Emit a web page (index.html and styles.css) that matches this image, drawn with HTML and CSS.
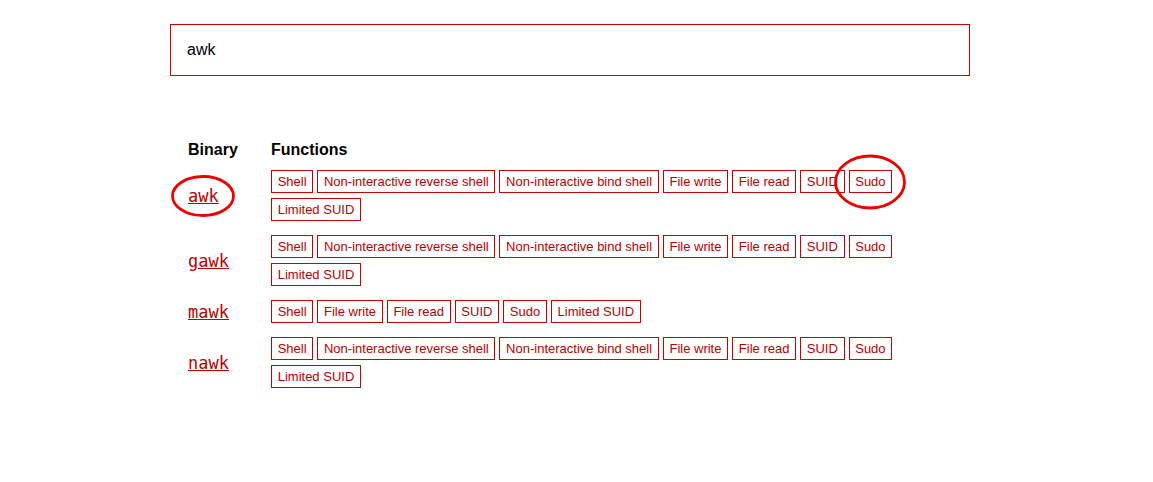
FILE: index.html
```html
<!DOCTYPE html>
<html>
<head>
<meta charset="utf-8">
<link rel="stylesheet" href="styles.css">
</head>
<body>
<div class="page">
  <input class="search" type="text" value="awk">
  <table class="bins">
    <thead>
      <tr><th class="col-bin">Binary</th><th>Functions</th></tr>
    </thead>
    <tbody>
      <tr>
        <td class="col-bin"><span class="mark"><a class="bin" href="#">awk</a><svg class="circle circle-bin" viewBox="0 0 64 42"><ellipse cx="32" cy="21" rx="30.5" ry="19.5"/></svg></span></td>
        <td><ul class="tags">
          <li class="tag">Shell</li><li class="tag">Non-interactive reverse shell</li><li class="tag">Non-interactive bind shell</li><li class="tag">File write</li><li class="tag">File read</li><li class="tag">SUID</li><li class="tag mark">Sudo<svg class="circle circle-tag" viewBox="0 0 72 55"><ellipse cx="36" cy="27.5" rx="34.5" ry="26"/></svg></li><li class="tag">Limited SUID</li>
        </ul></td>
      </tr>
      <tr>
        <td class="col-bin"><a class="bin" href="#">gawk</a></td>
        <td><ul class="tags">
          <li class="tag">Shell</li><li class="tag">Non-interactive reverse shell</li><li class="tag">Non-interactive bind shell</li><li class="tag">File write</li><li class="tag">File read</li><li class="tag">SUID</li><li class="tag">Sudo</li><li class="tag">Limited SUID</li>
        </ul></td>
      </tr>
      <tr>
        <td class="col-bin"><a class="bin" href="#">mawk</a></td>
        <td><ul class="tags">
          <li class="tag">Shell</li><li class="tag">File write</li><li class="tag">File read</li><li class="tag">SUID</li><li class="tag">Sudo</li><li class="tag">Limited SUID</li>
        </ul></td>
      </tr>
      <tr>
        <td class="col-bin"><a class="bin" href="#">nawk</a></td>
        <td><ul class="tags">
          <li class="tag">Shell</li><li class="tag">Non-interactive reverse shell</li><li class="tag">Non-interactive bind shell</li><li class="tag">File write</li><li class="tag">File read</li><li class="tag">SUID</li><li class="tag">Sudo</li><li class="tag">Limited SUID</li>
        </ul></td>
      </tr>
    </tbody>
  </table>
</div>
</body>
</html>
```
FILE: styles.css
```css
html, body {
  margin: 0;
  padding: 0;
  background: #fff;
}
body {
  font-family: "Liberation Sans", Arial, sans-serif;
  color: #000;
}
.page {
  width: 800px;
  margin-left: 170px;
  padding-top: 24px;
}
.search {
  display: block;
  box-sizing: border-box;
  width: 800px;
  height: 52px;
  margin: 0;
  padding: 0 16px;
  border: 1px solid #c00;
  border-radius: 0;
  outline: none;
  font-family: "Liberation Sans", Arial, sans-serif;
  font-size: 16px;
  color: #000;
  background: #fff;
}
.bins {
  margin: 64px 0 0 18px;
  width: 782px;
  border-collapse: collapse;
  border-spacing: 0;
}
.bins th {
  text-align: left;
  font-size: 16px;
  font-weight: bold;
  line-height: 18px;
  padding: 1px 0 4px 0;
}
.bins td {
  padding: 7px 0;
  vertical-align: middle;
}
.col-bin {
  width: 83px;
}
.bin {
  font-family: "DejaVu Sans Mono", monospace;
  font-size: 17px;
  color: #b00;
  text-decoration: underline;
}
.tags {
  list-style: none;
  margin: 0;
  padding: 0;
  display: flex;
  flex-wrap: wrap;
  gap: 5px 4px;
}
.tag {
  border: 1px solid #c00;
  padding: 2px 5.7px;
  font-size: 13px;
  line-height: 17px;
  color: #b00;
}
.mark {
  position: relative;
}
.circle {
  position: absolute;
  left: 50%;
  top: 50%;
  transform: translate(-50%, -50%);
  overflow: visible;
  pointer-events: none;
}
.circle ellipse {
  fill: none;
  stroke: #ee0000;
  stroke-width: 2.8;
}
.circle-bin {
  width: 64px;
  height: 42px;
}
.circle-tag {
  width: 72px;
  height: 55px;
}
```
